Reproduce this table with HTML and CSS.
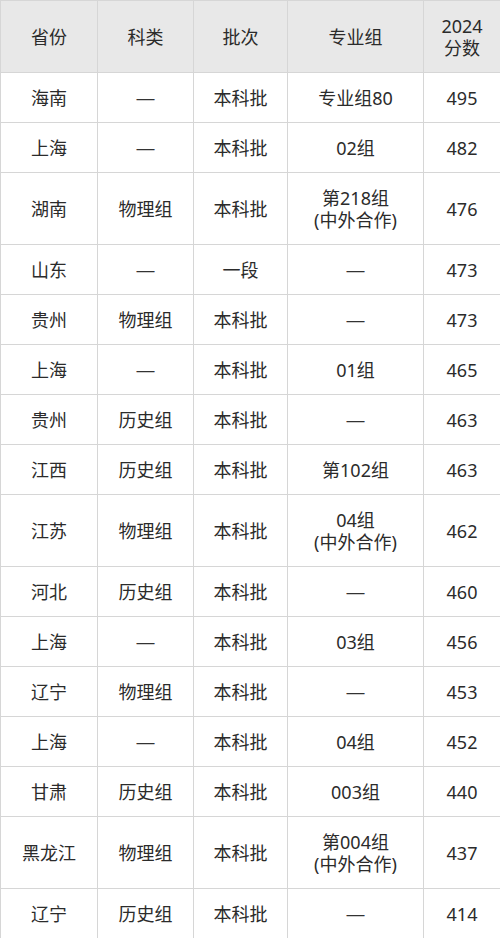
FILE: index.html
```
<!DOCTYPE html>
<html lang="zh">
<head>
<meta charset="utf-8">
<link rel="stylesheet" href="styles.css">
</head>
<body>
<table class="score">
<colgroup>
<col class="c1"><col class="c2"><col class="c3"><col class="c4"><col class="c5">
</colgroup>
<thead>
<tr class="head"><th>省份</th><th>科类</th><th>批次</th><th>专业组</th><th>2024<br>分数</th></tr>
</thead>
<tbody>
<tr><td>海南</td><td class="dash">—</td><td>本科批</td><td>专业组80</td><td>495</td></tr>
<tr><td>上海</td><td class="dash">—</td><td>本科批</td><td>02组</td><td>482</td></tr>
<tr class="tall"><td>湖南</td><td>物理组</td><td>本科批</td><td>第218组<br>(中外合作)</td><td>476</td></tr>
<tr><td>山东</td><td class="dash">—</td><td>一段</td><td class="dash">—</td><td>473</td></tr>
<tr><td>贵州</td><td>物理组</td><td>本科批</td><td class="dash">—</td><td>473</td></tr>
<tr><td>上海</td><td class="dash">—</td><td>本科批</td><td>01组</td><td>465</td></tr>
<tr><td>贵州</td><td>历史组</td><td>本科批</td><td class="dash">—</td><td>463</td></tr>
<tr><td>江西</td><td>历史组</td><td>本科批</td><td>第102组</td><td>463</td></tr>
<tr class="tall"><td>江苏</td><td>物理组</td><td>本科批</td><td>04组<br>(中外合作)</td><td>462</td></tr>
<tr><td>河北</td><td>历史组</td><td>本科批</td><td class="dash">—</td><td>460</td></tr>
<tr><td>上海</td><td class="dash">—</td><td>本科批</td><td>03组</td><td>456</td></tr>
<tr><td>辽宁</td><td>物理组</td><td>本科批</td><td class="dash">—</td><td>453</td></tr>
<tr><td>上海</td><td class="dash">—</td><td>本科批</td><td>04组</td><td>452</td></tr>
<tr><td>甘肃</td><td>历史组</td><td>本科批</td><td>003组</td><td>440</td></tr>
<tr class="tall"><td>黑龙江</td><td>物理组</td><td>本科批</td><td>第004组<br>(中外合作)</td><td>437</td></tr>
<tr><td>辽宁</td><td>历史组</td><td>本科批</td><td class="dash">—</td><td>414</td></tr>
</tbody>
</table>
</body>
</html>
```
FILE: styles.css
```
html, body {
  margin: 0;
  padding: 0;
  background: #ffffff;
}
.score {
  width: 500px;
  border-collapse: collapse;
  table-layout: fixed;
  font-family: "Noto Sans", "Noto Sans CJK SC", sans-serif;
  font-size: 18px;
  line-height: 22px;
  color: #2b2b2b;
}
.c1 { width: 97px; }
.c2 { width: 96px; }
.c3 { width: 94px; }
.c4 { width: 136px; }
.c5 { width: 77px; }
.score th,
.score td {
  border: 1px solid #d6d6d6;
  padding: 0;
  text-align: center;
  vertical-align: middle;
  font-weight: normal;
}
.score th {
  background: #e8e8e8;
}
.score td.dash {
  font-family: "Liberation Sans", sans-serif;
  color: #333333;
}
.head { height: 72px; }
.score tbody tr { height: 50px; }
.score tbody tr.tall { height: 72px; }
```
